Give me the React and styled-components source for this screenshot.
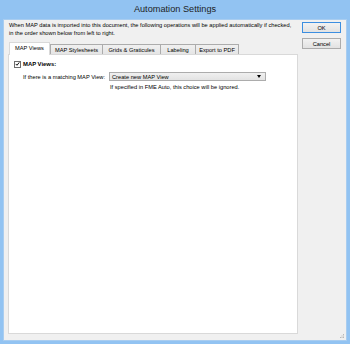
import React from "react";
import styled, { createGlobalStyle } from "styled-components";

const Global = createGlobalStyle`
  html, body { margin: 0; padding: 0; background: #ffffff; }
  body { font-family: "Liberation Sans", Arial, sans-serif; }
  * { box-sizing: border-box; }
`;

const tabs = [
  { label: "MAP Views", width: 41, active: true },
  { label: "MAP Stylesheets", width: 53 },
  { label: "Grids & Graticules", width: 59 },
  { label: "Labeling", width: 36 },
  { label: "Export to PDF", width: 44 },
];

const App = () => {
  return (
    <>
      <Global />
      <Window>
        <TitleBar>Automation Settings</TitleBar>
        <Client>
          <Main>
            <Desc>
              <Line>When MAP data is imported into this document, the following operations will be applied automatically if checked,</Line>
              <Line>in the order shown below from left to right.</Line>
            </Desc>
            <TabStrip>
              {tabs.map((t) => (
                <Tab key={t.label} width={t.width} active={t.active}>
                  {t.label}
                </Tab>
              ))}
            </TabStrip>
            <Panel>
              <CheckRow>
                <CheckBox>
                  <svg width="7" height="7" viewBox="0 0 7 7">
                    <path d="M1 3.4 L2.8 5.3 L6 1.2" fill="none" stroke="#111" strokeWidth="1.4" />
                  </svg>
                </CheckBox>
                <Bold>MAP Views:</Bold>
              </CheckRow>
              <FieldRow>
                <FieldLabel>If there is a matching MAP View:</FieldLabel>
                <Select>
                  <span>Create new MAP View</span>
                  <Arrow />
                </Select>
              </FieldRow>
              <Note>If specified in FME Auto, this choice will be ignored.</Note>
            </Panel>
          </Main>
          <Buttons>
            <Button primary>OK</Button>
            <Button>Cancel</Button>
          </Buttons>
          <Grip>
            <svg width="5" height="5" viewBox="0 0 5 5">
              <rect x="3" y="0" width="1" height="1" fill="#b8b8b8" />
              <rect x="1.5" y="1.5" width="1" height="1" fill="#b8b8b8" />
              <rect x="3" y="1.5" width="1" height="1" fill="#b8b8b8" />
              <rect x="0" y="3" width="1" height="1" fill="#b8b8b8" />
              <rect x="1.5" y="3" width="1" height="1" fill="#b8b8b8" />
              <rect x="3" y="3" width="1" height="1" fill="#b8b8b8" />
            </svg>
          </Grip>
        </Client>
      </Window>
    </>
  );
};

const Window = styled.div`
  width: 350px;
  height: 344px;
  background: #92c3f2;
  padding: 0 3px 3px 3px;
  display: flex;
  flex-direction: column;
`;

const TitleBar = styled.div`
  height: 19px;
  display: flex;
  align-items: center;
  justify-content: center;
  font-size: 9.2px;
  color: #1e1e1e;
  padding-bottom: 1px;
`;

const Client = styled.div`
  position: relative;
  flex: 1;
  background: #f0f0f0;
  border: 1px solid #a9cdf0;
  display: flex;
  gap: 4px;
  padding: 1px 5px 6px 4px;
`;

const Main = styled.div`
  flex: 1;
  display: flex;
  flex-direction: column;
`;

const Desc = styled.div`
  font-size: 5.7px;
  line-height: 8px;
  color: #000;
  height: 21px;
  margin-left: 1px;
`;

const Line = styled.div`
  white-space: nowrap;
`;

const TabStrip = styled.div`
  display: flex;
  align-items: flex-end;
  height: 12px;
  padding-left: 1px;
  position: relative;
  z-index: 1;
`;

const Tab = styled.div`
  width: ${(p) => p.width}px;
  height: ${(p) => (p.active ? "13px" : "10px")};
  margin-bottom: ${(p) => (p.active ? "-1px" : "0")};
  margin-right: ${(p) => (p.active ? "0" : "-1px")};
  border: 1px solid ${(p) => (p.active ? "#d9d9d9" : "#acacac")};
  border-bottom: none;
  background: ${(p) => (p.active ? "#ffffff" : "linear-gradient(#f0f0f0, #e5e5e5)")};
  font-size: 5.7px;
  color: #000;
  display: flex;
  align-items: center;
  justify-content: center;
  white-space: nowrap;
  padding-bottom: ${(p) => (p.active ? "2px" : "0")};
`;

const Panel = styled.div`
  flex: 1;
  background: #ffffff;
  border: 1px solid #d9d9d9;
  padding: 5px 5px;
  display: flex;
  flex-direction: column;
`;

const CheckRow = styled.div`
  display: flex;
  align-items: center;
  gap: 2px;
  height: 8px;
`;

const CheckBox = styled.div`
  width: 7px;
  height: 7px;
  border: 1px solid #6d6d6d;
  background: #fff;
  display: flex;
  align-items: center;
  justify-content: center;
  & svg { width: 6px; height: 6px; }
`;

const Bold = styled.span`
  font-size: 5.9px;
  font-weight: 700;
  color: #000;
`;

const FieldRow = styled.div`
  display: flex;
  align-items: center;
  margin-top: 4px;
  margin-left: 9px;
  height: 9px;
`;

const FieldLabel = styled.span`
  font-size: 5.7px;
  color: #000;
  width: 86px;
  white-space: nowrap;
`;

const Select = styled.div`
  width: 157px;
  height: 9px;
  border: 1px solid #acacac;
  background: linear-gradient(#f0f0f0, #e3e3e3);
  font-size: 5.7px;
  color: #000;
  display: flex;
  align-items: center;
  justify-content: space-between;
  padding: 0 4px 0 2px;
`;

const Arrow = styled.span`
  width: 0;
  height: 0;
  border-left: 2.5px solid transparent;
  border-right: 2.5px solid transparent;
  border-top: 3px solid #000;
`;

const Note = styled.div`
  font-size: 5.7px;
  color: #000;
  margin-left: 96px;
  margin-top: 3px;
`;

const Buttons = styled.div`
  width: 39px;
  display: flex;
  flex-direction: column;
  gap: 5px;
  padding-top: 1px;
`;

const Button = styled.div`
  height: 11px;
  border: 1px solid ${(p) => (p.primary ? "#3c8ee0" : "#acacac")};
  background: linear-gradient(#f2f2f2, #e2e2e2);
  font-size: 5.7px;
  color: #000;
  display: flex;
  align-items: center;
  justify-content: center;
`;

const Grip = styled.div`
  position: absolute;
  right: 1px;
  bottom: 1px;
  width: 5px;
  height: 5px;
  display: flex;
`;

export default App;
